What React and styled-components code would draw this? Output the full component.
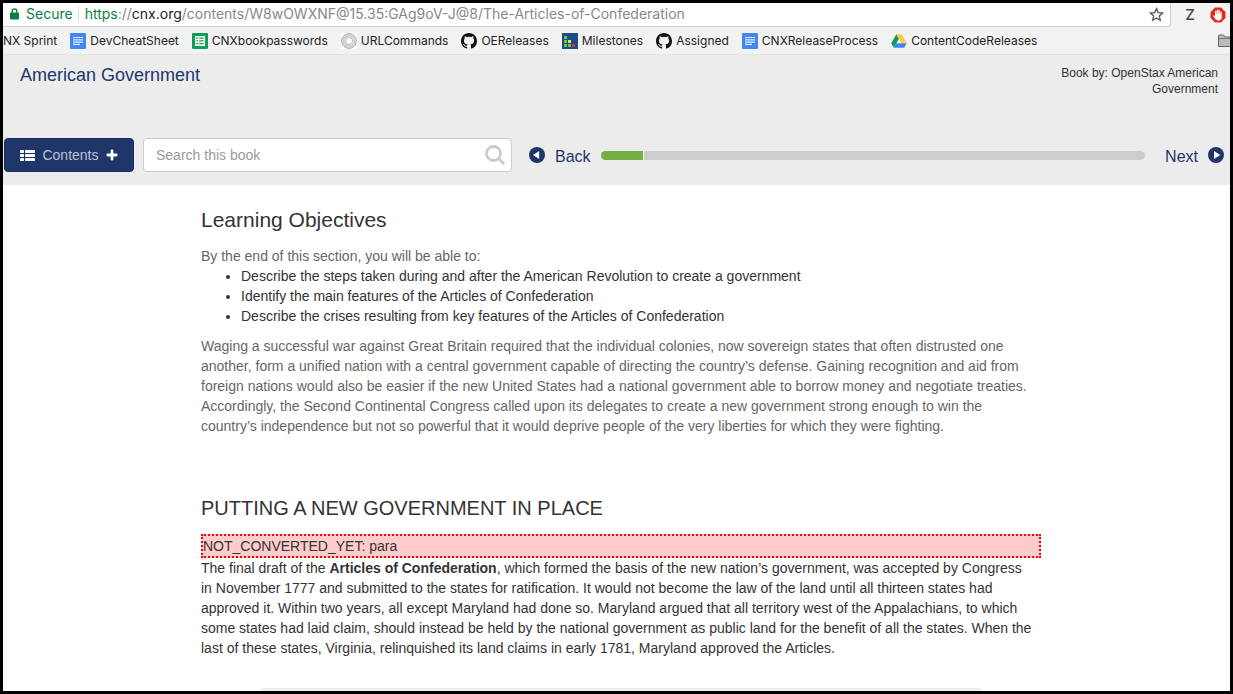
import React from "react";
import styled, { createGlobalStyle } from "styled-components";

const NAVY = "#20366b";

const GlobalStyle = createGlobalStyle`
  * { box-sizing: border-box; }
  body {
    margin: 0;
    background: #000;
    color: #333;
    font: 14px/20px "Liberation Sans", Arial, sans-serif;
  }
  a { text-decoration: none; color: inherit; }
  svg { display: block; flex: none; }
`;

const Window = styled.div`
  height: 100vh;
  display: flex;
  flex-direction: column;
  overflow: hidden;
  border: 3px solid #000;
  background: #fff;
`;

const AddressBar = styled.div`
  display: flex;
  align-items: stretch;
  flex: none;
  height: 24px;
  background: #f2f2f2;
  font-family: Inter, sans-serif;
`;

const UrlField = styled.div`
  flex: 1;
  min-width: 0;
  display: flex;
  align-items: center;
  padding: 0 6px 1px 7px;
  background: #fff;
  border: solid #d2d2d2;
  border-width: 0 1px 1px 0;
  border-bottom-right-radius: 3px;
  font-size: 14px;
  white-space: nowrap;
`;

const Secure = styled.span`
  margin-left: 7px;
  padding-right: 5px;
  margin-right: 6px;
  border-right: 1px solid #ddd;
  line-height: 16px;
  color: #0b8043;
`;

const Url = styled.span`
  flex: 1;
  overflow: hidden;
  color: #888;
`;

const Scheme = styled.span`
  color: #0b8043;
`;

const Host = styled.span`
  color: #222;
`;

const IconButton = styled.button`
  display: flex;
  align-items: center;
  justify-content: center;
  padding: 0;
  border: 0;
  background: none;
  color: #444;
`;

const Extensions = styled.div`
  display: flex;
  align-items: center;
  flex: none;
  gap: 14px;
  padding-left: 13px;
  width: 59px;
  overflow: hidden;
`;

const ZLetter = styled.span`
  font: 500 15px/20px Inter, sans-serif;
  width: 12px;
  text-align: center;
`;

const BookmarkBar = styled.nav`
  display: flex;
  align-items: center;
  justify-content: space-between;
  flex: none;
  height: 28px;
  background: #f2f2f2;
  border-bottom: 1px solid #e4e4e4;
  font: 12px/16px Inter, sans-serif;
  color: #222;
`;

const BookmarkList = styled.div`
  display: flex;
  gap: 13px;
  max-width: 1040px;
  overflow: hidden;
`;

const Bookmark = styled.a`
  display: flex;
  align-items: center;
  flex: none;
  gap: 4px;
  white-space: nowrap;
`;

const FolderButton = styled(IconButton)`
  width: 12px;
  justify-content: flex-start;
  overflow: hidden;
`;

const Header = styled.header`
  flex: none;
  background: #ececec;
`;

const TitleRow = styled.div`
  display: flex;
  justify-content: space-between;
  height: 83px;
  padding: 10px 12px 0 17px;
`;

const BookTitle = styled.a`
  font-size: 18px;
  line-height: 20px;
  color: ${NAVY};
`;

const Authors = styled.div`
  max-width: 170px;
  font-size: 12px;
  line-height: 16px;
  text-align: right;
`;

const Controls = styled.div`
  display: flex;
  align-items: center;
  padding: 0 6px 13px 1px;
`;

const ContentsButton = styled.button`
  display: flex;
  align-items: center;
  justify-content: space-between;
  width: 130px;
  height: 34px;
  padding: 0 15px;
  border: 1px solid #1a2c5a;
  border-radius: 4px;
  background: ${NAVY};
  color: #bcc3d3;
  font: inherit;
`;

const SearchBox = styled.label`
  display: flex;
  align-items: center;
  flex: 0 1 369px;
  height: 34px;
  margin: 0 17px 0 9px;
  padding: 0 6px 0 12px;
  border: 1px solid #ccc;
  border-radius: 4px;
  background: #fff;
`;

const SearchInput = styled.input`
  flex: 1;
  min-width: 0;
  padding: 0;
  border: 0;
  outline: 0;
  background: none;
  font: inherit;
  color: #333;
  &::placeholder { color: #999; opacity: 1; }
`;

const PageLink = styled.a`
  display: flex;
  align-items: center;
  gap: 10px;
  color: ${NAVY};
  font-size: 16px;
  line-height: 20px;
`;

const PageLabel = styled.span`
  padding-top: 3px;
`;

const Progress = styled.div`
  flex: 1;
  height: 9px;
  margin: 0 20px 0 10px;
  border-radius: 5px;
  background: #cdcdcd;
  overflow: hidden;
`;

const ProgressFill = styled.div`
  height: 100%;
  border-right: 1px solid #fff;
  background: #76b043;
`;

const Article = styled.main`
  width: 100%;
  max-width: 1038px;
  padding: 23px 0 0 198px;
`;

const Heading = styled.h2`
  margin: 0;
  font-size: ${(p) => p.$size}px;
  font-weight: 400;
  line-height: 24px;
`;

const Objectives = styled.ul`
  margin: 0 0 10px;
  padding-left: 40px;
`;

const Paragraph = styled.p`
  margin: 0;
  color: ${(p) => (p.$muted ? "#666" : "#333")};
`;

const Intro = styled(Paragraph)`
  margin-top: 14px;
`;

const Section = styled.section`
  margin-top: 60px;
`;

const Notice = styled.div`
  margin-top: 14px;
  border: 2px dotted #f00;
  background: #fcc;
`;

const Figure = styled.div`
  height: 60px;
  margin: 30px 60px 0;
  background: #eee;
`;

const Lock = () => (
  <svg width="9" height="12" viewBox="0 0 9 12">
    <path d="M2.2 5V3.2a2.3 2.3 0 0 1 4.6 0V5" fill="none" stroke="#0b8043" strokeWidth="1.4" />
    <rect y="4.6" width="9" height="7" rx="1" fill="#0b8043" />
  </svg>
);

const Star = () => (
  <svg width="15" height="15" viewBox="0 0 15 15">
    <path d="M7.5 1.6 9.2 5.6 13.6 6 10.3 8.9 11.3 13.2 7.5 10.9 3.7 13.2 4.7 8.9 1.4 6 5.8 5.6Z" fill="none" stroke="#555" strokeWidth="1.3" />
  </svg>
);

const Blocker = () => (
  <svg width="16" height="16" viewBox="0 0 16 16">
    <path d="M5 .5h6L15.5 5v6L11 15.5H5L.5 11V5Z" fill="#e8281d" />
    <path d="M5 9V4.4a.7.7 0 0 1 1.4 0V7h.4V3.2a.7.7 0 0 1 1.4 0V7h.4V3.6a.7.7 0 0 1 1.4 0V7h.4V4.9a.7.7 0 0 1 1.3 0V10c0 2-1 3.5-3.3 3.5C6.3 13.5 5.2 12.2 3.500 9.600c-.5-.9.5-1.400 1.500-.6Z" fill="#fff" />
  </svg>
);

const DocIcon = () => (
  <svg width="16" height="16" viewBox="0 0 16 16">
    <rect width="16" height="16" rx="1" fill="#4285f4" />
    <path d="M3 4.5h10M3 6.8h10M3 9.1h10M3 11.4h7" stroke="#e3edfd" strokeWidth="1.2" />
  </svg>
);

const SheetIcon = () => (
  <svg width="16" height="16" viewBox="0 0 16 16">
    <rect width="16" height="16" rx="1" fill="#0f9d58" />
    <path d="M3 3h10v10H3Z" fill="#fff" />
    <path d="M4.3 4.5h1.7v1.2H4.3ZM7.2 4.5h4.5v1.2H7.2ZM4.3 7.3h1.7v1.2H4.3ZM7.2 7.3h4.5v1.2H7.2ZM4.3 10.1h1.7v1.2H4.3ZM7.2 10.1h4.5v1.2H7.2Z" fill="#0f9d58" />
  </svg>
);

const RingIcon = () => (
  <svg width="16" height="16" viewBox="0 0 16 16">
    <rect width="16" height="16" fill="#fff" />
    <circle cx="8" cy="8" r="7.4" fill="#e2e2e2" stroke="#999" strokeWidth=".8" />
    <circle cx="8" cy="8" r="5.5" fill="none" stroke="#bbb" strokeWidth="1.5" strokeDasharray="1 1" />
    <circle cx="8" cy="8" r="3.5" fill="#fff" stroke="#aaa" strokeWidth=".8" />
  </svg>
);

const BoardIcon = () => (
  <svg width="16" height="16" viewBox="0 0 16 16">
    <rect width="16" height="16" fill="#1f4b85" />
    <path d="M2 3h3v3H2ZM2 7h3v3H2ZM2 11h3v3H2ZM6 11h3v3H6Z" fill="#6cc644" />
    <path d="M6 7h3v3H6Z" fill="#ffe02e" />
    <path d="M10 11h3v3h-3Z" fill="#e0334c" />
  </svg>
);

const DriveIcon = () => (
  <svg width="16" height="16" viewBox="0 0 16 16">
    <path d="M5.4 1.2 8 5.7 2.8 14.7 .2 10.2Z" fill="#0f9d58" />
    <path d="M5.4 1.2h5.2l5.2 9h-5.2Z" fill="#ffcd40" />
    <path d="M5.4 10.2h10.4l-2.6 4.5H2.8Z" fill="#4285f4" />
  </svg>
);

const FolderIcon = () => (
  <svg width="17" height="14" viewBox="0 0 17 14">
    <path d="M.5 12.5V2q0-1 1-1h4l1.500 2H16v9.5Z" fill="#bbb" stroke="#666" />
    <path d="M1 4.5h15" stroke="#777" />
  </svg>
);

const ListIcon = () => (
  <svg width="15" height="11" viewBox="0 0 15 11" fill="#fff">
    <rect width="4" height="3" rx=".7" />
    <rect x="5" width="10" height="3" rx=".7" />
    <rect y="4" width="4" height="3" rx=".7" />
    <rect x="5" y="4" width="10" height="3" rx=".7" />
    <rect y="8" width="4" height="3" rx=".7" />
    <rect x="5" y="8" width="10" height="3" rx=".7" />
  </svg>
);

const PlusIcon = () => (
  <svg width="12" height="12" viewBox="0 0 12 12">
    <path d="M6 1.8v8.4M1.8 6h8.4" stroke="#fff" strokeWidth="2.8" strokeLinecap="round" />
  </svg>
);

const SearchIcon = () => (
  <svg width="20" height="20" viewBox="0 0 20 20" fill="none" stroke="#ccc">
    <circle cx="8.5" cy="8.500" r="7" strokeWidth="2.8" />
    <path d="m13.8 13.8 4.5 4.5" strokeWidth="3" strokeLinecap="round" />
  </svg>
);

const ArrowIcon = ({ back }) => (
  <svg width="16" height="16" viewBox="0 0 16 16">
    <circle cx="8" cy="8" r="8" fill={NAVY} />
    <path d={back ? "M10.2 4v8L4 8Z" : "M6 4v8l6.2-4Z"} fill="#fff" />
  </svg>
);

const HubIcon = () => (
  <svg width="16" height="16" viewBox="0 0 16 16">
    <path fill="#111" d="M8 0C3.580 0 0 3.580 0 8c0 3.540 2.290 6.530 5.470 7.590.4.070.55-.17.55-.38 0-.19-.01-.82-.01-1.490-2.010.37-2.530-.49-2.690-.94-.09-.23-.48-.94-.82-1.130-.28-.15-.68-.52-.01-.53.63-.01 1.080.58 1.230.82.72 1.210 1.870.87 2.330.66.07-.52.28-.87.51-1.070-1.780-.2-3.640-.89-3.640-3.950 0-.87.31-1.590.82-2.150-.08-.2-.36-1.020.08-2.120 0 0 .67-.21 2.200.82.64-.18 1.320-.27 2-.27s1.360.09 2 .27c1.530-1.040 2.200-.82 2.200-.82.44 1.100.16 1.920.08 2.120.51.56.82 1.270.82 2.150 0 3.070-1.870 3.750-3.650 3.950.29.25.54.73.54 1.480 0 1.070-.01 1.930-.01 2.200 0 .21.15.46.55.38A8.010 8.010 0 0 0 16 8c0-4.420-3.580-8-8-8Z" />
  </svg>
);

const bookmarks = [
  ["NX Sprint", null],
  ["DevCheatSheet", DocIcon],
  ["CNXbookpasswords", SheetIcon],
  ["URLCommands", RingIcon],
  ["OEReleases", HubIcon],
  ["Milestones", BoardIcon],
  ["Assigned", HubIcon],
  ["CNXReleaseProcess", DocIcon],
  ["ContentCodeReleases", DriveIcon],
];

export default function App() {
  return (
    <Window>
      <GlobalStyle />
      <AddressBar>
        <UrlField>
          <Lock />
          <Secure>Secure</Secure>
          <Url>
            <Scheme>https</Scheme>://<Host>cnx.org</Host>
            /contents/W8wOWXNF@15.35:GAg9oV-J@8/The-Articles-of-Confederation
          </Url>
          <IconButton aria-label="Bookmark this page"><Star /></IconButton>
        </UrlField>
        <Extensions>
          <IconButton><ZLetter>Z</ZLetter></IconButton>
          <IconButton aria-label="Content blocker"><Blocker /></IconButton>
        </Extensions>
      </AddressBar>
      <BookmarkBar>
        <BookmarkList>
          {bookmarks.map(([name, Icon]) => (
            <Bookmark href="#" key={name}>
              {Icon && <Icon />}
              {name}
            </Bookmark>
          ))}
        </BookmarkList>
        <FolderButton aria-label="Other bookmarks"><FolderIcon /></FolderButton>
      </BookmarkBar>
      <Header>
        <TitleRow>
          <BookTitle href="#">American Government</BookTitle>
          <Authors>Book by: OpenStax American Government</Authors>
        </TitleRow>
        <Controls>
          <ContentsButton>
            <ListIcon />
            Contents
            <PlusIcon />
          </ContentsButton>
          <SearchBox>
            <SearchInput type="text" placeholder="Search this book" aria-label="Search this book" />
            <SearchIcon />
          </SearchBox>
          <PageLink href="#">
            <ArrowIcon back />
            <PageLabel>Back</PageLabel>
          </PageLink>
          <Progress role="progressbar" aria-label="Reading progress" aria-valuenow={8}>
            <ProgressFill style={{ width: "8%" }} />
          </Progress>
          <PageLink href="#">
            <PageLabel>Next</PageLabel>
            <ArrowIcon />
          </PageLink>
        </Controls>
      </Header>
      <Article>
        <Heading $size={21}>Learning Objectives</Heading>
        <Intro $muted>By the end of this section, you will be able to:</Intro>
        <Objectives>
          <li>Describe the steps taken during and after the American Revolution to create a government</li>
          <li>Identify the main features of the Articles of Confederation</li>
          <li>Describe the crises resulting from key features of the Articles of Confederation</li>
        </Objectives>
        <Paragraph $muted>
          Waging a successful war against Great Britain required that the individual colonies, now sovereign states that often distrusted one
          another, form a unified nation with a central government capable of directing the country’s defense. Gaining recognition and aid from
          foreign nations would also be easier if the new United States had a national government able to borrow money and negotiate treaties.
          Accordingly, the Second Continental Congress called upon its delegates to create a new government strong enough to win the
          country’s independence but not so powerful that it would deprive people of the very liberties for which they were fighting.
        </Paragraph>
        <Section>
          <Heading $size={20}>PUTTING A NEW GOVERNMENT IN PLACE</Heading>
          <Notice>NOT_CONVERTED_YET: para</Notice>
          <Paragraph>
            The final draft of the <b>Articles of Confederation</b>, which formed the basis of the new nation’s government, was accepted by Congress
            <br />
            in November 1777 and submitted to the states for ratification. It would not become the law of the land until all thirteen states had
            <br />
            approved it. Within two years, all except Maryland had done so. Maryland argued that all territory west of the Appalachians, to which
            <br />
            some states had laid claim, should instead be held by the national government as public land for the benefit of all the states. When the
            <br />
            last of these states, Virginia, relinquished its land claims in early 1781, Maryland approved the Articles.
          </Paragraph>
          <Figure />
        </Section>
      </Article>
    </Window>
  );
}
